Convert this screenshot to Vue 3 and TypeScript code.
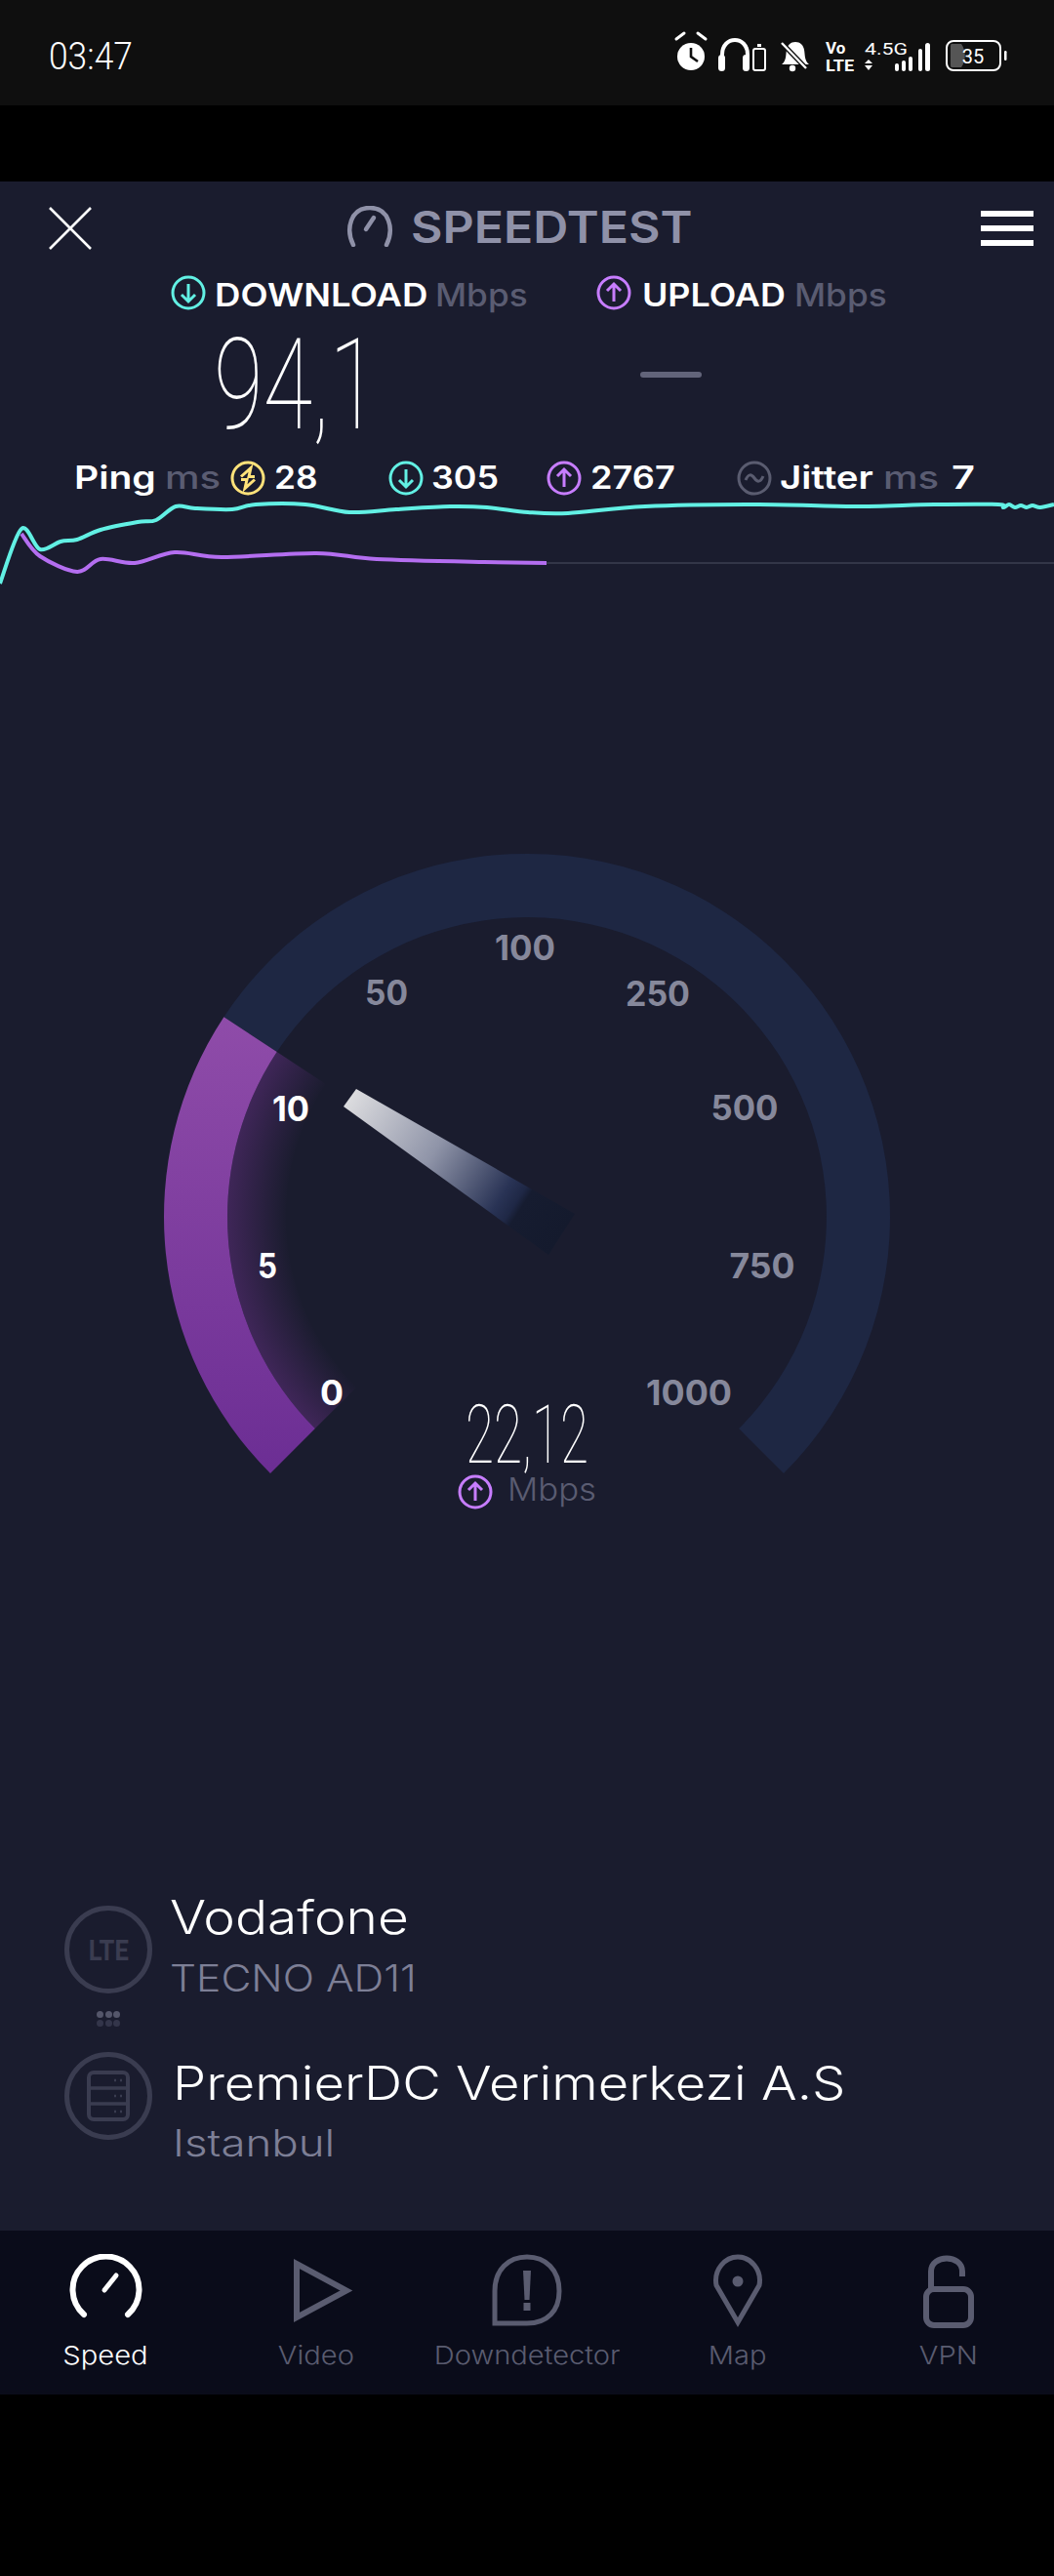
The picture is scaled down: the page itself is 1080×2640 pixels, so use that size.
<script setup lang="ts">
type Pt = [number, number]

const CX = 540
const CY = 387

function polar(r: number, deg: number): string {
  const a = (deg * Math.PI) / 180
  return `${(CX + r * Math.cos(a)).toFixed(1)} ${(CY - r * Math.sin(a)).toFixed(1)}`
}

function sector(r0: number, r1: number, from: number, to: number): string {
  const large = from - to > 180 ? 1 : 0
  return `M${polar(r1, from)} A${r1} ${r1} 0 ${large} 1 ${polar(r1, to)} L${polar(r0, to)} A${r0} ${r0} 0 ${large} 0 ${polar(r0, from)} Z`
}

const SPLIT = 146.6
const trackPath = sector(307, 372, SPLIT, -45)
const purplePath = sector(307, 372, 225, SPLIT)
const glowPath = sector(247, 307, 225, SPLIT)

function smooth(p: Pt[]): string {
  let d = `M${p[0][0]} ${p[0][1]}`
  for (let i = 0; i < p.length - 1; i++) {
    const a = p[Math.max(i - 1, 0)]
    const b = p[i]
    const c = p[i + 1]
    const e = p[Math.min(i + 2, p.length - 1)]
    const k = 0.16
    d += ` C${(b[0] + (c[0] - a[0]) * k).toFixed(1)} ${(b[1] + (c[1] - a[1]) * k).toFixed(1)} ${(c[0] - (e[0] - b[0]) * k).toFixed(1)} ${(c[1] - (e[1] - b[1]) * k).toFixed(1)} ${c[0]} ${c[1]}`
  }
  return d
}

// chart svg starts at y=510 on the page
const shift = (p: Pt[]): Pt[] => p.map(([x, y]) => [x, y - 510] as Pt)

const cyanLine = smooth(shift([
  [0, 598], [22, 542], [41, 563], [62, 555], [79, 553], [103, 543], [141, 535], [160, 533],
  [180, 519], [200, 521], [238, 522], [262, 517], [313, 517], [358, 525], [406, 522], [461, 519],
  [499, 520], [541, 525], [582, 526], [661, 519], [778, 517], [875, 519], [957, 517], [1023, 517],
  [1028, 520], [1034, 517], [1040, 520], [1046, 518], [1052, 520], [1058, 518], [1066, 520], [1080, 517]
]))

const purpleLine = smooth(shift([
  [22, 547], [41, 570], [79, 586], [103, 573], [138, 577], [179, 566], [227, 571], [324, 567],
  [386, 573], [496, 576], [560, 577]
]))

const gaugeLabels = [
  { t: '0', x: 340, y: 580, w: 24, on: true },
  { t: '5', x: 274, y: 450, w: 20, on: true },
  { t: '10', x: 298, y: 289, w: 38, on: true },
  { t: '50', x: 396, y: 170, w: 44, on: false },
  { t: '100', x: 538, y: 124, w: 62, on: false },
  { t: '250', x: 674, y: 171, w: 66, on: false },
  { t: '500', x: 763, y: 288, w: 69, on: false },
  { t: '750', x: 781, y: 450, w: 67, on: false },
  { t: '1000', x: 706, y: 580, w: 88, on: false }
]

const ARROW_DOWN = 'M18 9V27M11 20L18 27L25 20'
const ARROW_UP = 'M18 27V9M11 16L18 9L25 16'

const tabs = ['Speed', 'Video', 'Downdetector', 'Map', 'VPN']
</script>

<template>
  <div class="screen">
    <div class="status">
      <span class="clock">03:47</span>
      <svg class="status-icons" width="420" height="70" viewBox="0 0 420 70">
        <g fill="#fff">
          <circle cx="48" cy="38" r="14" />
          <path d="M33 20L41 14M63 20L55 14" stroke="#fff" stroke-width="3" stroke-linecap="round" />
          <path d="M48 29V38L55 43" stroke="#0f0f0f" stroke-width="2.6" fill="none" />
          <path d="M80 50V36C80 16 106 16 106 36V50" fill="none" stroke="#fff" stroke-width="4" />
          <rect x="76" y="36" width="7" height="17" rx="3.5" />
          <rect x="101" y="36" width="7" height="17" rx="3.5" />
          <rect x="112" y="30" width="12" height="22" rx="2" fill="none" stroke="#fff" stroke-width="2" />
          <rect x="116" y="25" width="4" height="3" />
          <path d="M141 46C146 42 145 36 146 31C147 26 150 23 155 23C160 23 163 26 164 31C165 36 164 42 169 46Z" />
          <circle cx="152" cy="50" r="3.2" />
          <path d="M141 24L166 50" stroke="#0f0f0f" stroke-width="5" />
          <path d="M141 24L166 50" stroke="#fff" stroke-width="2.4" />
          <text class="st" x="186" y="35" font-size="17">Vo</text>
          <text class="st" x="186" y="53" font-size="17" textLength="29" lengthAdjust="spacingAndGlyphs">LTE</text>
          <text class="st st--thin" x="226" y="36" font-size="17" textLength="44" lengthAdjust="spacingAndGlyphs">4.5G</text>
          <path d="M230 41L234 45H226ZM230 52L234 47H226Z" />
          <rect x="257" y="45" width="4" height="8" rx="2" />
          <rect x="264" y="42" width="4" height="11" rx="2" />
          <rect x="271" y="38" width="4" height="15" rx="2" />
          <rect x="281" y="30" width="4" height="23" rx="2" />
          <rect x="288" y="24" width="5" height="29" rx="2.5" />
          <rect x="310" y="22" width="55" height="30" rx="7" fill="none" stroke="#fff" stroke-width="2" />
          <path d="M315 25H325C330 32 330 42 325 49H315Q314 49 314 47V27Q314 25 315 25Z" fill="#555" />
          <rect x="369" y="32" width="2.5" height="10" rx="1.2" />
          <text class="st st--thin" x="337" y="45" font-size="20" text-anchor="middle">35</text>
        </g>
      </svg>
    </div>
    <div class="gap-top"></div>

    <main class="app">
      <header class="head">
        <svg class="close" width="44" height="44" viewBox="0 0 44 44">
          <path d="M1 1L43 43M43 1L1 43" stroke="#fff" stroke-width="2.6" />
        </svg>
        <div class="brand">
          <svg width="48" height="42" viewBox="0 0 48 42">
            <path d="M7 40C-1 24 4 2 24 2C44 2 49 24 41 40" fill="none" stroke="#8f91a8" stroke-width="4.5" stroke-linecap="round" />
            <path d="M20 24L28 12" stroke="#8f91a8" stroke-width="4.5" stroke-linecap="round" />
          </svg>
          <span class="brand-name">SPEEDTEST</span>
        </div>
        <div class="burger"><i></i><i></i><i></i></div>
      </header>

      <div class="labels">
        <div class="label label--down">
          <svg class="ring" viewBox="0 0 36 36"><circle cx="18" cy="18" r="16" class="c-cyan" /><path :d="ARROW_DOWN" class="c-cyan" /></svg>
          <b class="fit t-download">DOWNLOAD</b><em class="fit t-mbps">Mbps</em>
        </div>
        <div class="label label--up">
          <svg class="ring" viewBox="0 0 36 36"><circle cx="18" cy="18" r="16" class="c-purple" /><path :d="ARROW_UP" class="c-purple" /></svg>
          <b class="fit t-upload">UPLOAD</b><em class="fit t-mbps">Mbps</em>
        </div>
      </div>

      <div class="values">
        <span class="big">94,1</span>
        <span class="dash"></span>
      </div>

      <div class="stats">
        <b class="fit t-ping">Ping</b><em class="fit t-ms">ms</em>
        <svg class="ring ring--ping" viewBox="0 0 36 36">
          <circle cx="18" cy="18" r="16" class="c-yellow" />
          <path d="M11 16.500L21 7.500L19 16.500H25M25 19.500L15 28.500L17 19.500H11" class="c-yellow" />
        </svg>
        <b class="fit t-28">28</b>
        <svg class="ring ring--d" viewBox="0 0 36 36"><circle cx="18" cy="18" r="16" class="c-cyan" /><path :d="ARROW_DOWN" class="c-cyan" /></svg>
        <b class="fit t-305">305</b>
        <svg class="ring ring--u" viewBox="0 0 36 36"><circle cx="18" cy="18" r="16" class="c-purple" /><path :d="ARROW_UP" class="c-purple" /></svg>
        <b class="fit t-2767">2767</b>
        <svg class="ring ring--j" viewBox="0 0 36 36">
          <circle cx="18" cy="18" r="16" class="c-gray" />
          <path d="M9 20C12 13 15 14 18 18C21 22 24 23 27 16" class="c-gray" />
        </svg>
        <b class="fit t-jitter">Jitter</b><em class="fit t-ms t-ms--j">ms</em><b class="fit t-7">7</b>
      </div>

      <svg class="chart" width="1080" height="92" viewBox="0 0 1080 92">
        <path d="M560 67H1080" stroke="#3d3f52" stroke-width="1.5" />
        <path :d="purpleLine" fill="none" stroke="#b46ef0" stroke-width="4" />
        <path :d="cyanLine" fill="none" stroke="#62f0e4" stroke-width="4" />
      </svg>

      <svg class="gauge" width="1080" height="700" viewBox="0 0 1080 700">
        <defs>
          <linearGradient id="arcPurple" gradientUnits="userSpaceOnUse" x1="0" y1="180" x2="0" y2="646">
            <stop offset="0" stop-color="#8f4ca9" />
            <stop offset="1" stop-color="#6c2e94" />
          </linearGradient>
          <radialGradient id="arcGlow" gradientUnits="userSpaceOnUse" cx="540" cy="387" r="307">
            <stop offset="0.8" stop-color="#3f2658" stop-opacity="0" />
            <stop offset="1" stop-color="#3f2658" />
          </radialGradient>
          <linearGradient id="needle" gradientUnits="userSpaceOnUse" x1="358" y1="265" x2="575" y2="405">
            <stop offset="0" stop-color="#dcdcdf" />
            <stop offset="0.4" stop-color="#8f94a8" />
            <stop offset="0.72" stop-color="#293355" />
            <stop offset="0.78" stop-color="#1f2846" />
            <stop offset="0.81" stop-color="#161c30" />
            <stop offset="1" stop-color="#141a2d" />
          </linearGradient>
        </defs>
        <path :d="trackPath" fill="#1e2743" />
        <path :d="glowPath" fill="url(#arcGlow)" />
        <path :d="purplePath" fill="url(#arcPurple)" />
        <path d="M365 256L352 274L562 426L589 384Z" fill="url(#needle)" />
        <text
          v-for="l in gaugeLabels"
          :key="l.t"
          :x="l.x"
          :y="l.y"
          text-anchor="middle"
          class="tick"
          :class="{ 'tick--on': l.on }"
          :textLength="l.w"
          lengthAdjust="spacingAndGlyphs"
        >{{ l.t }}</text>
        <text class="live" x="540" y="639" text-anchor="middle" textLength="126" lengthAdjust="spacingAndGlyphs">22,12</text>
        <svg x="469" y="651" width="36" height="36" viewBox="0 0 36 36">
          <circle cx="18" cy="18" r="16" class="c-purple" /><path :d="ARROW_UP" class="c-purple" />
        </svg>
        <text class="unit" x="520" y="678" textLength="91" lengthAdjust="spacingAndGlyphs">Mbps</text>
      </svg>

      <section class="info">
        <div class="info-row">
          <div class="badge badge--lte"><span>LTE</span></div>
          <div class="info-text">
            <div class="name name--a">Vodafone</div>
            <div class="sub sub--a">TECNO AD11</div>
          </div>
        </div>
        <div class="dots">
          <i></i><i></i><i></i><i class="dim"></i><i class="dim"></i><i class="dim"></i>
        </div>
        <div class="info-row info-row--server">
          <div class="badge">
            <svg width="44" height="52" viewBox="0 0 44 52">
              <rect x="2" y="2" width="40" height="48" rx="5" fill="none" stroke="#3a3c50" stroke-width="4" />
              <path d="M2 18H42M2 34H42" stroke="#3a3c50" stroke-width="3.5" />
              <path d="M28 10H30M34 10H36M28 26H30M34 26H36M28 42H30M34 42H36" stroke="#3a3c50" stroke-width="2.5" />
            </svg>
          </div>
          <div class="info-text">
            <div class="name name--b">PremierDC Verimerkezi A.S</div>
            <div class="sub sub--b">Istanbul</div>
          </div>
        </div>
      </section>
    </main>

    <nav class="tabs">
      <div v-for="(tab, i) in tabs" :key="tab" class="tab" :class="{ 'tab--on': i === 0 }">
        <svg width="90" height="76" viewBox="0 0 90 76">
          <g v-if="i === 0" fill="none" stroke="#fff" stroke-width="6" stroke-linecap="round">
            <path d="M23 62A34 34 0 1 1 68 62" />
            <path d="M44 37L56 22" stroke-width="5" />
          </g>
          <path v-else-if="i === 1" d="M25 10V65L76 37.500Z" fill="none" stroke="#5a5c70" stroke-width="6" />
          <g v-else-if="i === 2">
            <path d="M12 71V38C12 16 26 3 45 3C64 3 78 16 78 38C78 58 66 71 45 71Z" fill="none" stroke="#5a5c70" stroke-width="5" />
            <path d="M41 17H49L47.500 47H42.500Z" fill="#5a5c70" />
            <rect x="41.500" y="50" width="7" height="8" fill="#5a5c70" />
          </g>
          <g v-else-if="i === 3">
            <path d="M45 70L23 32C20 16 32 3 45 3C58 3 70 16 67 32Z" fill="none" stroke="#5a5c70" stroke-width="5" />
            <circle cx="45" cy="28" r="5.500" fill="#5a5c70" />
          </g>
          <g v-else fill="none" stroke="#5a5c70" stroke-width="6">
            <rect x="22" y="36" width="46" height="37" rx="8" />
            <path d="M27 36V18C27 0 59 0 59 18V23" />
          </g>
        </svg>
        <span class="tab-name">{{ tab }}</span>
      </div>
    </nav>
  </div>
</template>

<style>
html,
body {
  background: #000;
}
</style>

<style scoped>
.screen {
  width: 1080px;
  height: 2640px;
  background: #000;
  font-family: Inter, "Noto Sans", sans-serif;
  overflow: hidden;
}

.status {
  height: 108px;
  background: #0f0f0f;
  display: flex;
  align-items: flex-start;
  justify-content: space-between;
  padding-left: 50px;
}

.clock {
  margin-top: 36px;
  font-family: Roboto, sans-serif;
  font-size: 38px;
  line-height: 44px;
  font-weight: 300;
  color: #fff;
  transform: scaleX(0.93);
  transform-origin: left center;
}

.status-icons {
  margin-top: 20px;
}

.st {
  font-family: Roboto, sans-serif;
  font-weight: 700;
}

.st--thin {
  font-weight: 400;
}

.gap-top {
  height: 78px;
}

.app {
  height: 2100px;
  background: #1a1c2e;
  display: flex;
  flex-direction: column;
}

.head {
  height: 90px;
  padding: 26px 21px 0 50px;
  box-sizing: border-box;
  display: flex;
  align-items: flex-start;
}

.brand {
  display: flex;
  align-items: center;
  margin: -2px 0 0 261px;
  color: #8f91a8;
  font-size: 45px;
  line-height: 42px;
  font-weight: 600;
}

.brand-name {
  width: 286px;
  margin: 2px 0 0 18px;
  transform: scaleX(1.11);
  transform-origin: left center;
  white-space: nowrap;
}

.burger {
  width: 54px;
  margin: 4px 0 0 auto;
  display: flex;
  flex-direction: column;
  gap: 9px;
}

.burger i {
  height: 6px;
  background: #fff;
}

.labels {
  display: flex;
  padding: 6px 0 0 175px;
  height: 36px;
}

.label {
  display: flex;
  align-items: center;
  font-size: 32px;
  line-height: 36px;
  color: #fff;
}

.label--down {
  width: 436px;
}

.fit {
  display: block;
  flex: none;
  white-space: nowrap;
  transform-origin: left center;
  font-style: normal;
  font-weight: 600;
}

em.fit {
  color: #5a5c72;
  font-weight: 500;
}

.label .fit {
  position: relative;
  top: 3px;
}

.t-download {
  width: 216px;
  margin-left: 9px;
  transform: scaleX(1.143);
}

.t-upload {
  width: 146px;
  margin-left: 11px;
  transform: scaleX(1.12);
}

.t-mbps {
  width: 92px;
  margin-left: 10px;
  transform: scaleX(1.1);
}

.ring {
  width: 36px;
  height: 36px;
  flex: none;
}

.ring circle,
.ring path,
.gauge circle,
.gauge svg path {
  fill: none;
  stroke-width: 3;
}

.c-cyan {
  stroke: #62f0e4;
}

.c-purple {
  stroke: #c77dff;
}

.c-yellow {
  stroke: #ffe27a;
}

.c-gray {
  stroke: #5a5c70;
}

.values {
  height: 116px;
  margin-top: 24px;
  position: relative;
}

.big {
  display: block;
  margin: -5px 0 0 219px;
  font-family: Roboto, sans-serif;
  font-weight: 100;
  font-size: 130px;
  line-height: 116px;
  color: #fff;
  transform: scaleX(0.71);
  transform-origin: left top;
}

.dash {
  position: absolute;
  left: 656px;
  top: 39px;
  width: 63px;
  height: 6px;
  border-radius: 3px;
  background: #62647a;
}

.stats {
  height: 40px;
  margin-top: 12px;
  padding-left: 76px;
  display: flex;
  align-items: center;
  font-size: 32px;
  line-height: 40px;
  color: #fff;
}

.t-ping {
  width: 82px;
  transform: scaleX(1.22);
}

.t-ms {
  width: 55px;
  margin-left: 11px;
  transform: scaleX(1.25);
}

.ring--ping {
  margin-left: 12px;
}

.t-28 {
  width: 43px;
  margin-left: 9px;
  transform: scaleX(1.1);
}

.ring--d {
  margin-left: 74px;
}

.t-305 {
  width: 66px;
  margin-left: 8px;
  transform: scaleX(1.12);
}

.ring--u {
  margin-left: 52px;
}

.t-2767 {
  width: 86px;
  margin-left: 9px;
  transform: scaleX(1.13);
}

.ring--j {
  margin-left: 64px;
}

.t-jitter {
  width: 95px;
  margin-left: 8px;
  transform: scaleX(1.2);
}

.t-7 {
  width: 21px;
  margin-left: 15px;
  transform: scaleX(1.3);
}

.chart {
  display: block;
}

.gauge {
  display: block;
  margin-top: 258px;
}

.tick {
  font-size: 35px;
  font-weight: 700;
  fill: #86889b;
}

.tick--on {
  fill: #fff;
}

.live {
  font-family: Roboto, sans-serif;
  font-weight: 100;
  font-size: 84px;
  fill: #fff;
}

.unit {
  font-size: 33px;
  font-weight: 300;
  fill: #5a5c72;
}

.info {
  margin-top: 378px;
  padding-left: 66px;
}

.info-row {
  display: flex;
  align-items: flex-start;
}

.badge {
  width: 90px;
  height: 90px;
  box-sizing: border-box;
  border: 5px solid #3a3c50;
  border-radius: 50%;
  display: flex;
  align-items: center;
  justify-content: center;
  flex: none;
}

.badge--lte {
  margin-top: 15px;
}

.badge span {
  font-family: Roboto, sans-serif;
  font-size: 30px;
  font-weight: 700;
  color: #3a3c50;
  transform: scaleX(0.85);
}

.info-text {
  margin-left: 18px;
}

.name,
.sub {
  white-space: nowrap;
  transform-origin: left center;
  font-weight: 300;
}

.name {
  font-size: 48px;
  line-height: 54px;
  color: #fff;
}

.sub {
  margin-top: 13px;
  font-size: 38px;
  line-height: 44px;
  color: #7d7f96;
}

.name--a {
  transform: scaleX(1.147);
}

.sub--a {
  transform: scaleX(1.12);
}

.name--b {
  transform: scaleX(1.133);
}

.sub--b {
  margin-top: 12px;
  transform: scaleX(1.2);
}

.dots {
  width: 24px;
  margin: 12px 0 0 33px;
  display: grid;
  grid-template-columns: repeat(3, 7px);
  gap: 2px 1.5px;
  height: 16px;
}

.dots i {
  height: 7px;
  border-radius: 50%;
  background: #54566a;
}

.dots .dim {
  background: #33354a;
}

.info-row--server {
  margin-top: 26px;
}

.info-row--server .info-text {
  margin: 5px 0 0 21px;
}

.tabs {
  height: 168px;
  background: #0a0c1a;
  display: grid;
  grid-template-columns: repeat(5, 216px);
}

.tab {
  display: flex;
  flex-direction: column;
  align-items: center;
  padding-top: 24px;
  color: #5a5c70;
  font-size: 26px;
  font-weight: 300;
  line-height: 34px;
}

.tab svg {
  display: block;
  margin-bottom: 11px;
}

.tab-name {
  transform: scaleX(1.12);
}

.tab--on {
  color: #fff;
}
</style>
